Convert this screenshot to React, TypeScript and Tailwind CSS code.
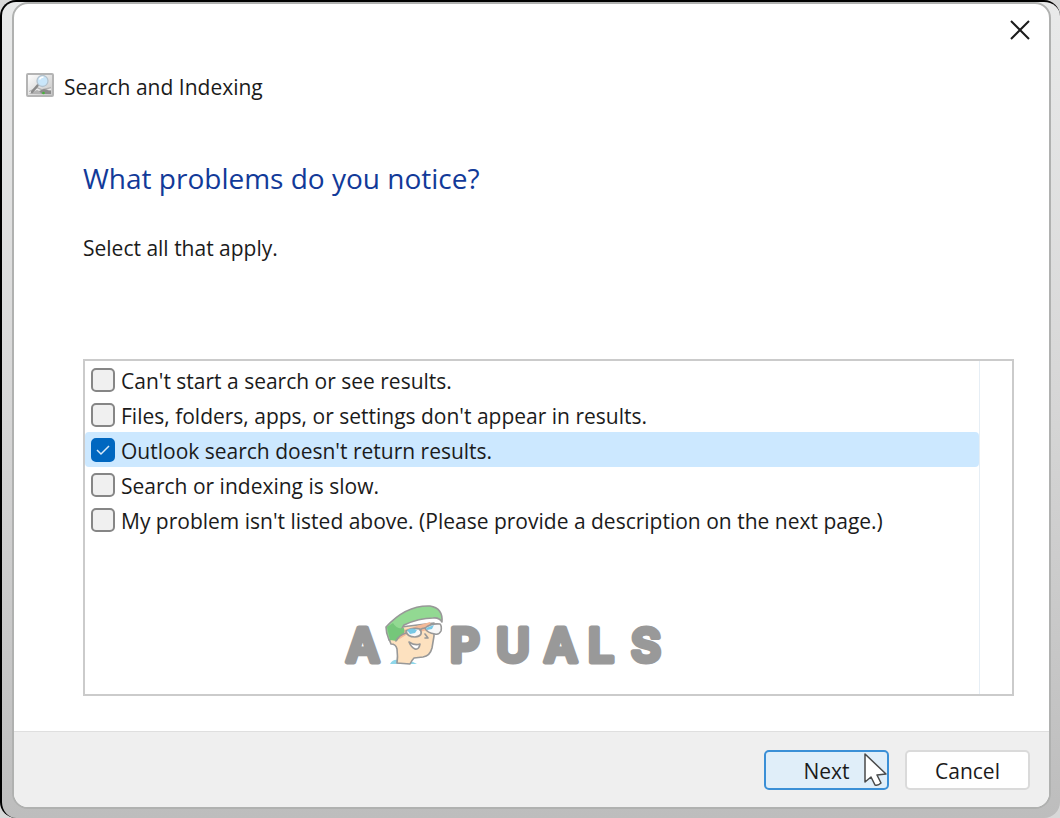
import clsx from "clsx";
import { useState } from "react";

const problems = [
  "Can't start a search or see results.",
  "Files, folders, apps, or settings don't appear in results.",
  "Outlook search doesn't return results.",
  "Search or indexing is slow.",
  "My problem isn't listed above. (Please provide a description on the next page.)",
];

function TroubleshooterIcon() {
  return (
    <svg width="28" height="24" viewBox="0 0 28 24" aria-hidden="true">
      <defs>
        <linearGradient id="panel" x1="0" y1="0" x2="1" y2="1">
          <stop offset="0" stopColor="#fff" />
          <stop offset="1" stopColor="#c4c4c4" />
        </linearGradient>
      </defs>
      <rect x="1" y="1" width="26" height="22" rx="1" fill="url(#panel)" stroke="#b4b4b4" strokeWidth="2" />
      <path d="M3 18l8-4 5 2 9-2v7H3z" fill="#b2b2b2" />
      <path d="M3 20l8-4 6 3 8-3" fill="none" stroke="#ececec" strokeWidth="1.5" />
      <path d="M12 12l-6 7" stroke="#8a8a8a" strokeWidth="2.5" strokeLinecap="round" />
      <circle cx="16.500" cy="8" r="5.500" fill="#c9e6fa" stroke="#b4c3ce" strokeWidth="1.300" />
      <path d="M13.500 6.500q1-2.500 4-2.500" fill="none" stroke="#fff" strokeWidth="1.500" />
      <path d="M13 18l5-2 7 2v3h-9z" fill="#8c8c8c" />
      <circle cx="17.500" cy="20" r="1.300" fill="#45b538" />
    </svg>
  );
}

function Logo() {
  return (
    <svg width="340" height="76" viewBox="340 601 340 76" role="img" aria-label="Appuals">
      <g
        fill="#999"
        stroke="#999"
        strokeWidth="5"
        strokeLinejoin="round"
        fontFamily="Inter, sans-serif"
        fontWeight="600"
        fontSize="46"
      >
        <text x="347" y="661">A</text>
        <text x="451 497 545 589 632" y="661">PUALS</text>
      </g>
      {/* face */}
      <g stroke="#989898" strokeWidth="1.600" strokeLinejoin="round" strokeLinecap="round">
        <path d="M391 663q3-5 8-4l13 1 6 3z" fill="#8fd7ea" stroke="none" />
        <path
          d="M390 638l2 5q5 0 6 5 1 8 0 14l13 1q2-4 4-6l9-1q7-1 9-9l2-12v-13l-33 4z"
          fill="#fde1bf"
        />
        <path d="M401 630l30-9 2 7-26 6-8 5z" fill="#f4b997" stroke="none" />
        <path d="M387 626q20-22 44-21 13 2 12 16-3-5-9-4-14 0-29 7l-7 12-8 3q-3-7-3-13z" fill="#92d992" />
        <path d="M388 626l6-4q4 7 11 5 2 6-4 8l-3 5-7-1z" fill="#75c77a" stroke="none" />
        <path d="M397 640q3-6 10-8" fill="none" />
        <path d="M407 630q7-4 14-2 4 7-5 8-8 0-9-6z" fill="#f8f8f8" />
        <path d="M426 627q6-5 15-4 2 2 1 7-2 4-6 3-8-1-10-6z" fill="#f8f8f8" />
        <path d="M421 629q2-2 5-2" fill="none" />
        <path d="M408 629q5-3 10 0l-2 3-5 1z" fill="#77c8e5" stroke="none" />
        <path d="M427 627l8-3-2 4-5 1z" fill="#77c8e5" stroke="none" />
        <path d="M426 633l3 4h-3" fill="none" />
        <path d="M410 641q6 4 11 2-1 6-5 5-4-2-6-7z" fill="#fff" />
      </g>
    </svg>
  );
}

function Cursor() {
  return (
    <svg
      className="pointer-events-none absolute left-[100px] top-[3px]"
      width="24"
      height="36"
      viewBox="0 0 24 36"
      aria-hidden="true"
    >
      <path
        d="M1 1v28l6-5 4 8q3 1 6-2l-4-8 9-1z"
        fill="#fff"
        stroke="#4a4a4a"
        strokeWidth="1.500"
        strokeLinejoin="round"
      />
    </svg>
  );
}

export default function App() {
  const [selected, setSelected] = useState([2]);

  const toggle = (index: number) => {
    setSelected((prev) =>
      prev.includes(index) ? prev.filter((e) => e !== index) : [...prev, index]
    );
  };

  return (
    <div className="min-h-screen bg-[#d8d8d8] font-['Open_Sans',sans-serif] text-[21px] text-[#1b1b1b]">
      <div className="flex min-h-screen flex-col rounded-2xl border-l-2 border-t-2 border-black bg-linear-to-b from-[#e9eaea] from-0% via-[#d6d6d6] via-50% to-[#bdbdbd] pb-[9px] pl-[10px] pr-[9px]">
        <main className="flex grow flex-col overflow-hidden rounded-2xl border-2 border-[#b0b1b0] bg-white">
          <div className="flex justify-end pr-[13px] pt-[10px]">
            <button type="button" aria-label="Close" className="flex size-8 items-center justify-center">
              <svg width="20" height="20" viewBox="0 0 20 20" aria-hidden="true">
                <path d="M1 1l18 18M19 1L1 19" stroke="#1b1b1b" strokeWidth="2" />
              </svg>
            </button>
          </div>

          <header className="mt-[21px] flex items-center gap-[10px] pl-3">
            <TroubleshooterIcon />
            <h1 className="pt-1 leading-8">Search and Indexing</h1>
          </header>

          <section className="flex grow flex-col pb-[35px] pl-[69px] pr-[35px] pt-[55px]">
            <h2 className="text-[28px] leading-10 text-[#123a99]">What problems do you notice?</h2>
            <p className="mt-[34px] leading-8">Select all that apply.</p>

            <div className="mt-[95px] flex grow border-2 border-[#cbcbcb] pr-8">
              <div className="flex grow flex-col border-r border-[#e6eef5]">
                <ul className="pt-px">
                  {problems.map((problem, index) => (
                    <li key={problem}>
                      <label
                        className={clsx(
                          "flex h-[35px] items-center gap-[6px] rounded-sm pl-[6px]",
                          selected.includes(index) && "bg-[#cce8ff]"
                        )}
                      >
                        <span className="relative flex size-6">
                          <input
                            type="checkbox"
                            checked={selected.includes(index)}
                            onChange={() => toggle(index)}
                            className="peer size-6 appearance-none rounded-[5px] border-2 border-[#868686] bg-[#f0f0f0] checked:border-[#0067c0] checked:bg-[#0067c0]"
                          />
                          <svg
                            className="pointer-events-none absolute inset-0 hidden peer-checked:block"
                            width="24"
                            height="24"
                            viewBox="0 0 24 24"
                            aria-hidden="true"
                          >
                            <path d="M6 12l4 4 8-8" fill="none" stroke="#d9ebfa" strokeWidth="1.500" />
                          </svg>
                        </span>
                        <span className="pt-1">{problem}</span>
                      </label>
                    </li>
                  ))}
                </ul>
                <div className="mt-auto flex pb-4 pl-[254px]">
                  <Logo />
                </div>
              </div>
            </div>
          </section>

          <footer className="flex justify-end gap-4 border-t border-[#dfdfdf] bg-[#efefef] px-[19px] pb-[17px] pt-[18px]">
            <div className="relative">
              <button
                type="button"
                className="h-10 w-[125px] rounded-[5px] border-2 border-[#3b8fd6] bg-[#e0eef9] pt-1"
              >
                Next
              </button>
              <Cursor />
            </div>
            <button type="button" className="h-10 w-[125px] rounded-[5px] border-2 border-[#dadada] bg-white pt-1">
              Cancel
            </button>
          </footer>
        </main>
      </div>
    </div>
  );
}
